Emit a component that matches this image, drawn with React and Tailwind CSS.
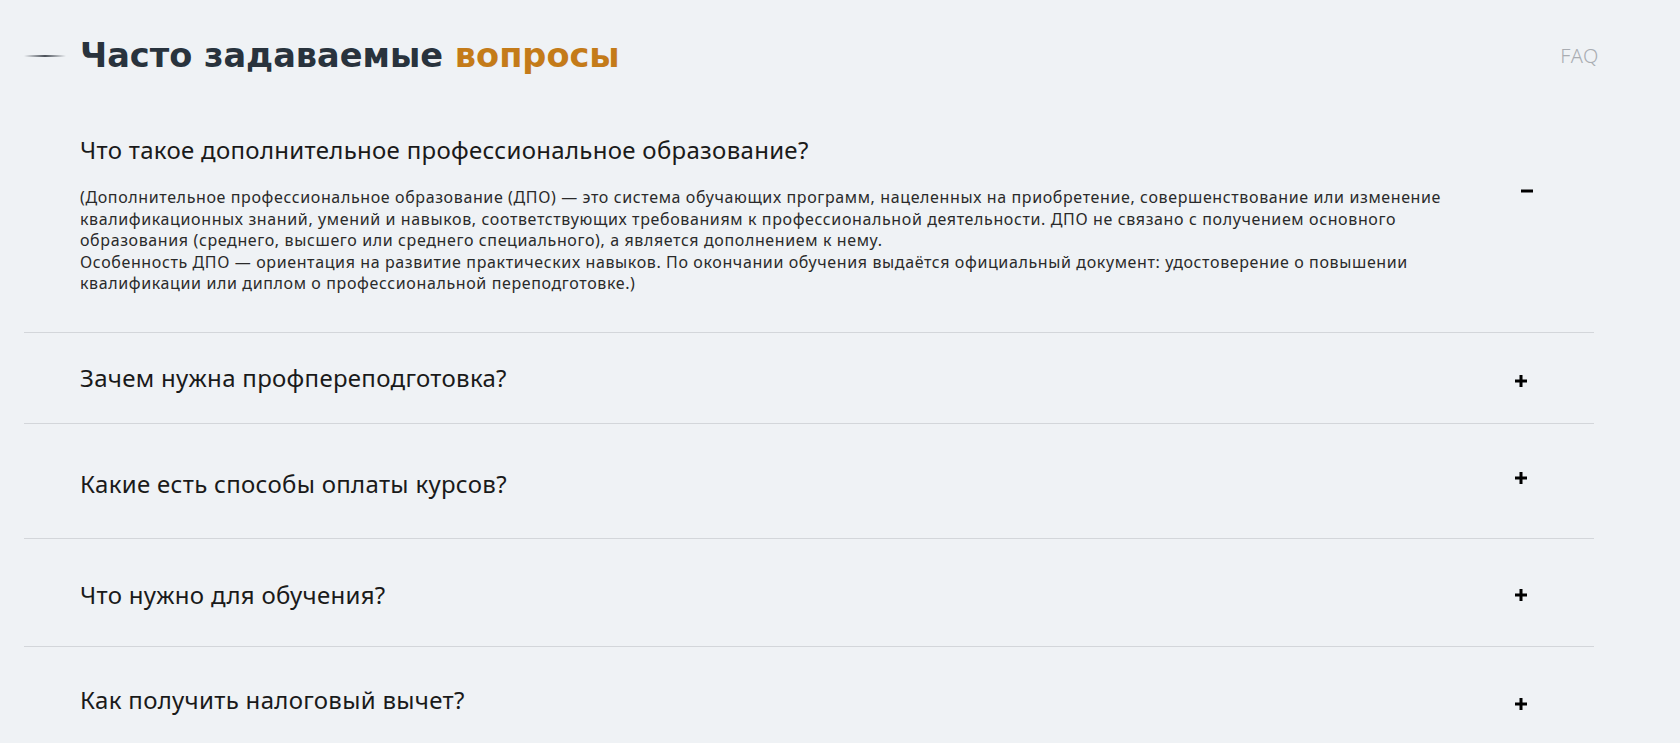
import React from "react";

const faq = [
  { q: "Зачем нужна профпереподготовка?", row: "h-[91px]", text: "pt-0", icon: "pt-[7px]" },
  { q: "Какие есть способы оплаты курсов?", row: "h-[115px]", text: "pt-[7px]", icon: "pb-[5px]" },
  { q: "Что нужно для обучения?", row: "h-[108px]", text: "pt-[6px]", icon: "pt-[6px]" },
  { q: "Как получить налоговый вычет?", row: "h-[97px]", text: "pt-[9px]", icon: "pt-[17px]" },
];

function Plus() {
  return (
    <svg width="14" height="14" viewBox="0 0 14 14" className="block">
      <path d="M7 1v12M1 7h12" stroke="#000" strokeWidth="3" />
    </svg>
  );
}

function Minus() {
  return (
    <svg width="14" height="4" viewBox="0 0 14 4" className="block">
      <path d="M1 2h12" stroke="#000" strokeWidth="3" />
    </svg>
  );
}

export default function App() {
  return (
    <div className="min-h-screen w-full bg-[#eff2f5] text-[#111] font-['Noto_Sans',sans-serif] overflow-hidden">
      {/* заголовок */}
      <div className="flex items-center justify-between pl-[24px] pr-[81px] pt-[36px]">
        <div className="flex items-center">
          <div className="h-[2px] w-[42px] bg-gradient-to-r from-transparent via-[#4a5058] to-transparent" />
          <h2 className="ml-[14px] h-[40px] text-[33.6px] leading-[40px] font-bold text-[#29333d] font-['DejaVu_Sans',sans-serif]">
            Часто задаваемые <span className="text-[#c47b19]">вопросы</span>
          </h2>
        </div>
        <span className="text-[20px] font-light text-[#a9adb2] tracking-[0.6px]">FAQ</span>
      </div>

      {/* открытый вопрос */}
      <div className="ml-[24px] w-[1570px] border-b border-[#d3d6da] pl-[56px] pr-[60px] pt-[58px] pb-[37px]">
        <div className="text-[24px] leading-[32px] tracking-[0.3px] text-[#1a1a1a]">
          Что такое дополнительное профессиональное образование?
        </div>
        <div className="mt-[21px] flex justify-between">
          <p className="text-[16px] leading-[21.5px] text-[#2a2a2a] tracking-[0.62px]">
            (Дополнительное профессиональное образование (ДПО) — это система обучающих программ, нацеленных на приобретение, совершенствование или изменение
            <br />
            квалификационных знаний, умений и навыков, соответствующих требованиям к профессиональной деятельности. ДПО не связано с получением основного
            <br />
            образования (среднего, высшего или среднего специального), а является дополнением к нему.
            <br />
            Особенность ДПО — ориентация на развитие практических навыков. По окончании обучения выдаётся официальный документ: удостоверение о повышении
            <br />
            квалификации или диплом о профессиональной переподготовке.)
          </p>
          <div className="pt-[2px]">
            <Minus />
          </div>
        </div>
      </div>

      {/* остальные вопросы */}
      {faq.map((item, i) => (
        <div
          key={i}
          className={`ml-[24px] w-[1570px] pl-[56px] pr-[66px] flex items-center justify-between ${item.row} ${
            i < faq.length - 1 ? "border-b border-[#d3d6da]" : ""
          }`}
        >
          <div className={`text-[24px] leading-[32px] tracking-[0.3px] text-[#1a1a1a] ${item.text}`}>{item.q}</div>
          <div className={item.icon}>
            <Plus />
          </div>
        </div>
      ))}
    </div>
  );
}
